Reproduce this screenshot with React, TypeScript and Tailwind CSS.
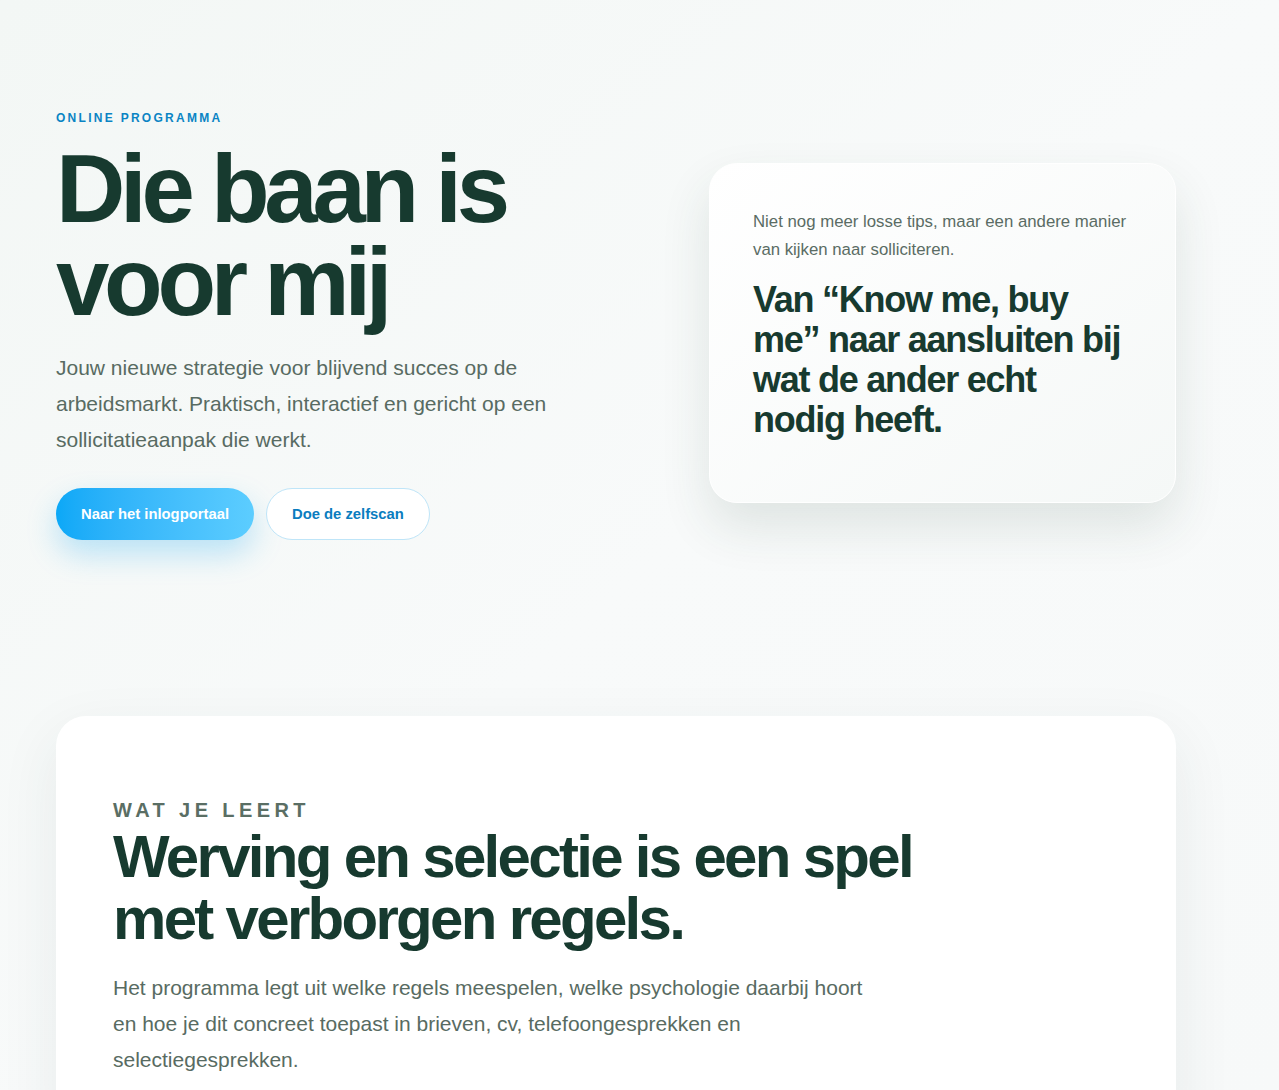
import React from "react";

const font = { fontFamily: '"Liberation Sans", Arial, Helvetica, sans-serif' };

export default function App() {
  return (
    <div
      className="min-h-[1090px] w-full overflow-hidden bg-gradient-to-br from-[#f3f7f5] via-[#f8fafa] to-[#f7f9f9]"
      style={font}
    >
      <div className="ml-[56px] w-[1120px]">
        {/* Hero */}
        <section className="flex items-center justify-between pt-[110px]">
          <div className="w-[520px]">
            <p className="text-[12px] font-bold leading-4 tracking-[0.19em] text-[#0a84c4]">
              ONLINE PROGRAMMA
            </p>
            <h1 className="mt-4 text-[96px] font-bold leading-[93px] tracking-[-0.055em] text-[#173a2f]">
              Die baan is
              <br />
              voor mij
            </h1>
            <p className="mt-[22px] max-w-[500px] text-[21px] leading-9 text-[#586b62]">
              Jouw nieuwe strategie voor blijvend succes op de arbeidsmarkt. Praktisch, interactief en gericht op een
              sollicitatieaanpak die werkt.
            </p>
            <div className="mt-[30px] flex gap-3">
              <button className="h-[52px] rounded-full bg-gradient-to-r from-[#0aa8f7] to-[#5ccdff] px-[25px] text-[14.8px] font-bold text-white shadow-[0_14px_30px_rgba(30,170,240,0.28)]">
                Naar het inlogportaal
              </button>
              <button className="h-[52px] rounded-full border border-[#bfe5f8] bg-white px-[25px] text-[14.8px] font-bold text-[#0a7dbf]">
                Doe de zelfscan
              </button>
            </div>
          </div>

          <div className="mt-[16px] w-[467px] rounded-[28px] border border-white bg-gradient-to-br from-white to-[#f5f8f7] px-[43px] pb-[62px] pt-11 shadow-[0_24px_50px_rgba(40,70,60,0.12)]">
            <p className="text-[16.8px] leading-7 text-[#5a6c64]">
              Niet nog meer losse tips, maar een andere manier van kijken naar solliciteren.
            </p>
            <h2 className="mt-4 text-[36px] font-bold leading-10 tracking-[-0.035em] text-[#173a2f]">
              Van “Know me, buy me” naar aansluiten bij wat de ander echt nodig heeft.
            </h2>
          </div>
        </section>

        {/* Wat je leert */}
        <section className="mt-[176px] rounded-[30px] bg-white pb-16 pl-[57px] pr-14 pt-[82px] shadow-[0_20px_60px_rgba(40,70,60,0.08)]">
          <p className="text-[20px] font-bold leading-6 tracking-[0.22em] text-[#5a6e64]">WAT JE LEERT</p>
          <h2 className="mt-1 max-w-[820px] text-[60px] font-bold leading-[62px] tracking-[-0.045em] text-[#173a2f]">
            Werving en selectie is een spel met verborgen regels.
          </h2>
          <p className="mt-5 max-w-[762px] text-[21px] leading-9 text-[#586b62]">
            Het programma legt uit welke regels meespelen, welke psychologie daarbij hoort en hoe je dit concreet
            toepast in brieven, cv, telefoongesprekken en selectiegesprekken.
          </p>
        </section>
      </div>
    </div>
  );
}
